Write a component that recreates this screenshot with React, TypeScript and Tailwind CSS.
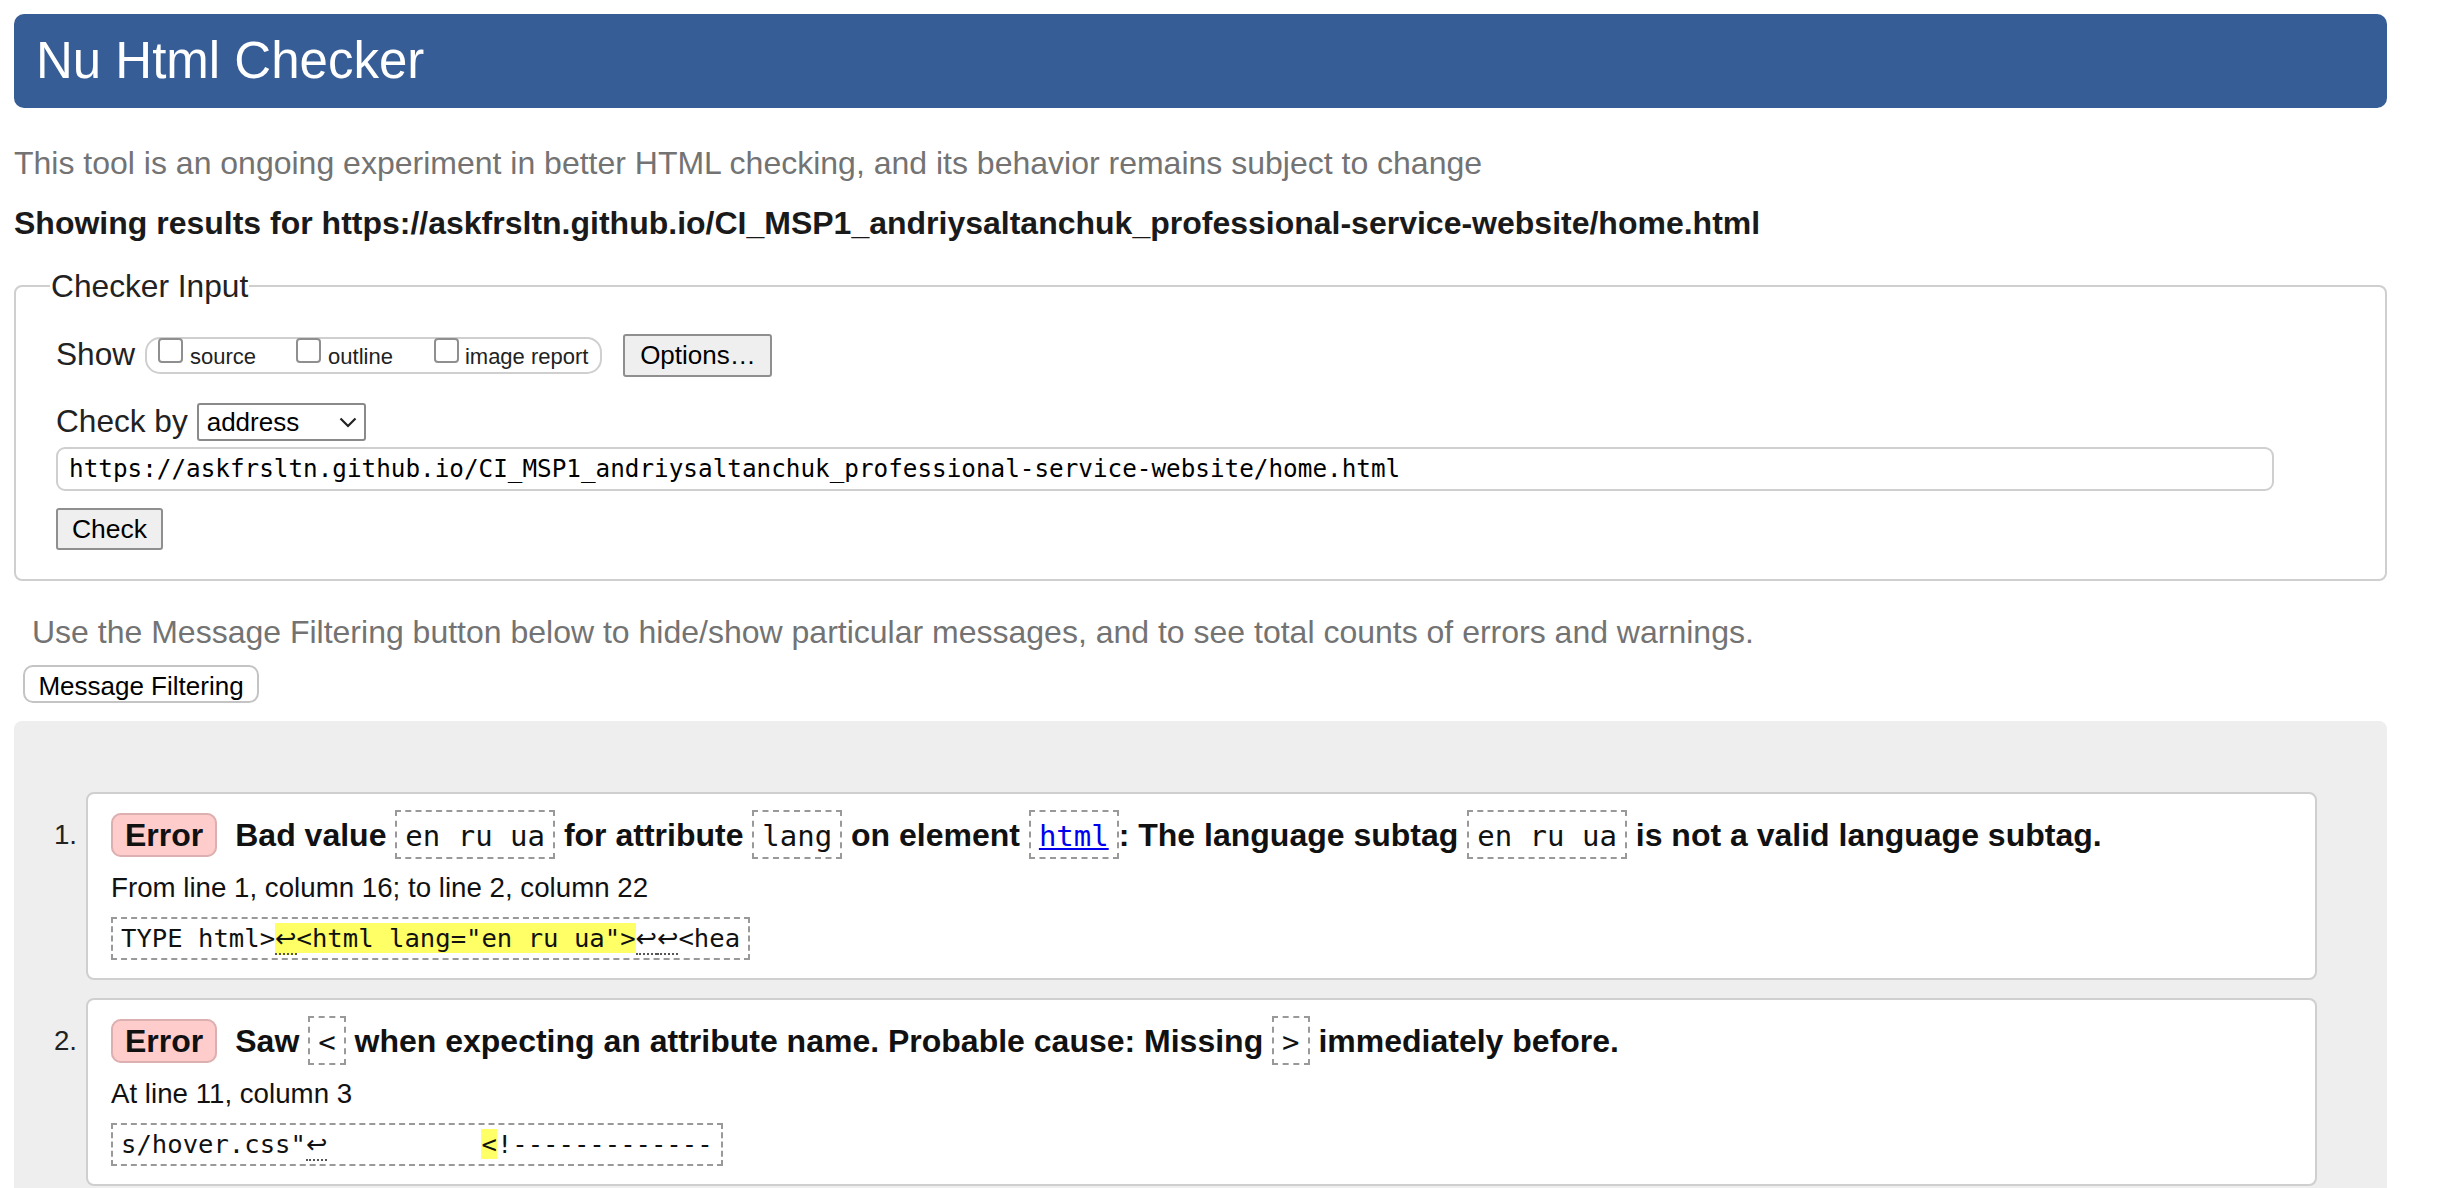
import React from "react";

// line-break marker used inside source extracts
function Lf({ highlighted }: { highlighted?: boolean }) {
  return (
    <span
      className={
        "border-b-2 border-dotted border-[#555] font-['DejaVu_Sans',sans-serif] " +
        (highlighted ? "bg-[#ffff66]" : "")
      }
    >
      ↩
    </span>
  );
}

function Code({ children }: { children: React.ReactNode }) {
  return (
    <code className="border-2 border-dashed border-[#999] px-[8px] pt-[7px] pb-[4px] font-['DejaVu_Sans_Mono',monospace] text-[29px] font-normal leading-none">
      {children}
    </code>
  );
}

function Badge() {
  return (
    <span className="mr-[18px] rounded-[10px] border-2 border-[#dcb0b0] bg-[#ffcccc] px-[12px] pt-[2px] pb-[1.5px] leading-none">
      Error
    </span>
  );
}

function Message({
  num,
  title,
  location,
  extract,
}: {
  num: number;
  title: React.ReactNode;
  location: string;
  extract: React.ReactNode;
}) {
  return (
    <li className="flex">
      <span className="w-[72px] pt-[18px] pr-[9px] text-right text-[27.7px] leading-[50px]">
        {num}.
      </span>
      <div className="flex-1 rounded-[8px] border-2 border-[#cfcfcf] bg-white pt-[16px] pb-[18px] pl-[23px]">
        <p className="text-[32px] font-bold leading-[50px] text-[#111]">
          <Badge />
          {title}
        </p>
        <p className="mt-[8px] text-[27.7px] leading-[40px] text-[#111]">{location}</p>
        <div className="mt-[9px] w-fit whitespace-pre border-2 border-dashed border-[#999] px-[8px] font-['DejaVu_Sans_Mono',monospace] text-[25.6px] leading-[39px] text-[#111]">
          {extract}
        </div>
      </div>
    </li>
  );
}

export default function App() {
  return (
    <div className="h-screen overflow-hidden bg-white font-['Liberation_Sans',Arial,sans-serif] text-[#222]">
      <div className="ml-[14px] w-[2373px] pt-[14px]">
        <header className="flex h-[94px] items-center rounded-[10px] bg-[#365d95] pl-[22px] text-[51px] text-white">
          Nu Html Checker
        </header>

        <p className="mt-[31px] flex h-[48px] items-center text-[32px] text-[#737373]">
          This tool is an ongoing experiment in better HTML checking, and its behavior remains subject to change
        </p>
        <p className="mt-[12px] flex h-[48px] items-center text-[32px] font-bold text-[#1a1a1a]">
          Showing results for https://askfrsltn.github.io/CI_MSP1_andriysaltanchuk_professional-service-website/home.html
        </p>

        <fieldset className="mt-[21px] rounded-[8px] border-2 border-[#cfcfcf] pb-[29px]">
          <legend className="ml-[34px] px-[1px] text-[31.7px] leading-[36px]">Checker Input</legend>
          <div className="pt-[29px] pl-[40px]">
            <div className="flex h-[44px] items-center">
              <span className="text-[31.6px]">Show</span>
              <div className="ml-[10px] flex h-[37px] items-start rounded-[15px] border-2 border-[#cfcfcf] pr-[12px] pl-[11px] text-[22px]">
                <span className="-mt-[1px] h-[25px] w-[25px] rounded-[4px] border-2 border-[#8f8f8f] bg-white" />
                <span className="mt-[7px] ml-[7px] leading-[22px]">source</span>
                <span className="-mt-[1px] ml-[40px] h-[25px] w-[25px] rounded-[4px] border-2 border-[#8f8f8f] bg-white" />
                <span className="mt-[7px] ml-[7px] leading-[22px]">outline</span>
                <span className="-mt-[1px] ml-[41px] h-[25px] w-[25px] rounded-[4px] border-2 border-[#8f8f8f] bg-white" />
                <span className="mt-[7px] ml-[6px] leading-[22px]">image report</span>
              </div>
              <button className="ml-[21px] h-[43px] w-[149px] rounded-[3px] border-2 border-[#8f8f8f] bg-[#efefef] text-[26px] text-black">
                Options…
              </button>
            </div>

            <div className="mt-[23px] flex h-[44px] items-center">
              <span className="text-[31.6px]">Check by</span>
              <div className="ml-[9px] flex h-[38px] w-[169px] items-center justify-between rounded-[3px] border-2 border-[#8a8a8a] bg-white pr-[7px] pl-[8px] text-[26px] text-black">
                <span>address</span>
                <svg width="18" height="11" viewBox="0 0 18 11" fill="none">
                  <polyline points="1.5,1.5 9,9 16.5,1.5" stroke="#222" strokeWidth="2.2" />
                </svg>
              </div>
            </div>

            <div className="mt-[3px] flex h-[44px] w-[2218px] items-center rounded-[9px] border-2 border-[#cfcfcf] pl-[11px] font-['DejaVu_Sans_Mono',monospace] text-[24.3px] text-black">
              https://askfrsltn.github.io/CI_MSP1_andriysaltanchuk_professional-service-website/home.html
            </div>

            <button className="mt-[17px] h-[42px] w-[107px] rounded-[3px] border-2 border-[#8f8f8f] bg-[#efefef] text-[26.5px] text-black">
              Check
            </button>
          </div>
        </fieldset>

        <p className="mt-[27px] flex h-[48px] items-center pl-[18px] text-[32px] text-[#737373]">
          Use the Message Filtering button below to hide/show particular messages, and to see total counts of errors and warnings.
        </p>
        <button className="mt-[9px] ml-[9px] h-[38px] w-[236px] rounded-[10px] border-2 border-[#c4c4c4] bg-white text-[26px] text-black">
          Message Filtering
        </button>

        <div className="mt-[18px] rounded-[8px] bg-[#eeeeee] pt-[71px] pr-[70px] pb-[40px]">
          <ol className="flex flex-col gap-[18px]">
            <Message
              num={1}
              title={
                <>
                  Bad value <Code>en ru ua</Code> for attribute <Code>lang</Code> on element{" "}
                  <Code>
                    <a className="text-[#0000ee] underline">html</a>
                  </Code>
                  : The language subtag <Code>en ru ua</Code> is not a valid language subtag.
                </>
              }
              location="From line 1, column 16; to line 2, column 22"
              extract={
                <>
                  TYPE html&gt;
                  <Lf highlighted />
                  <span className="bg-[#ffff66]">&lt;html lang="en ru ua"&gt;</span>
                  <Lf />
                  <Lf />
                  &lt;hea
                </>
              }
            />
            <Message
              num={2}
              title={
                <>
                  Saw <Code>&lt;</Code> when expecting an attribute name. Probable cause: Missing{" "}
                  <Code>&gt;</Code> immediately before.
                </>
              }
              location="At line 11, column 3"
              extract={
                <>
                  s/hover.css"
                  <Lf />
                  {"          "}
                  <span className="bg-[#ffff66]">&lt;</span>
                  !-------------
                </>
              }
            />
          </ol>
        </div>
      </div>
    </div>
  );
}
